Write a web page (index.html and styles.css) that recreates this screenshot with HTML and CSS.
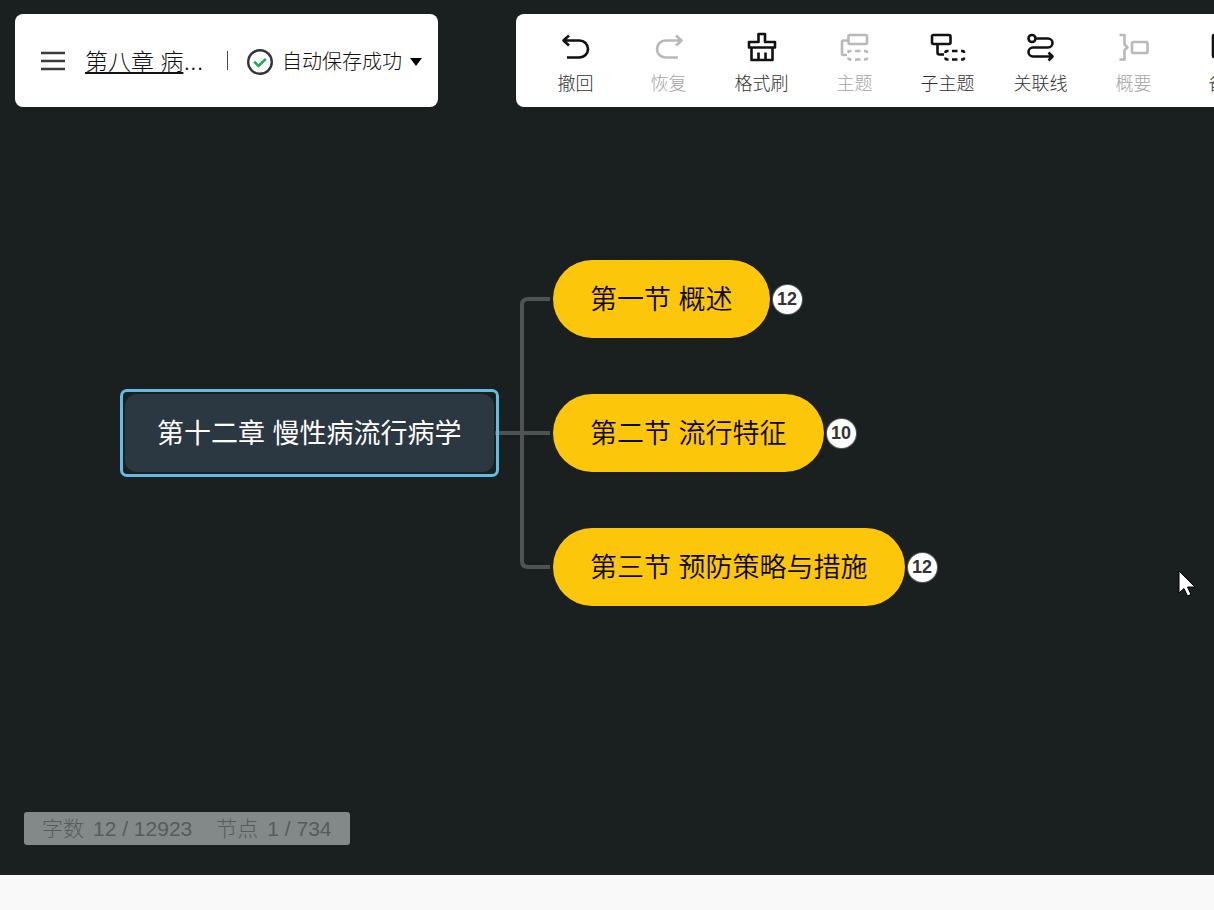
FILE: index.html
```html
<!DOCTYPE html>
<html lang="zh-CN">
<head>
<meta charset="utf-8">
<title>思维导图</title>
<link rel="stylesheet" href="styles.css">
</head>
<body>
<main class="canvas">
  <header class="header">
    <div class="file-card">
      <button class="menu-button" type="button" aria-label="菜单">
        <svg width="24" height="20" viewBox="0 0 24 20"><path d="M0 2h24M0 10h24M0 18h24" stroke="#3c3c3c" stroke-width="2.6"/></svg>
      </button>
      <div class="file-name"><a class="file-link" href="#">第八章 病</a><span class="dots">...</span></div>
      <span class="divider"></span>
      <button class="save-state" type="button">
        <svg width="28" height="28" viewBox="0 0 28 28" fill="none"><circle cx="14" cy="14" r="11.8" stroke="#34343a" stroke-width="2.4"/><path d="M8.2 13.8l4.300 4.200 7.300-7" stroke="#1fae55" stroke-width="2.6"/></svg>
        <span>自动保存成功</span>
        <svg width="12" height="8" viewBox="0 0 12 8"><path d="M0 0h12L6 8z" fill="#000"/></svg>
      </button>
    </div>
    <nav class="toolbar">
      <button class="tool" type="button">
        <svg class="icon" viewBox="0 0 32 32"><path d="M9 4.500L3.500 9.500L9 14.500M4 9.500h15.500a8.500 8.500 0 0 1 0 17H7"/></svg>
        <span>撤回</span>
      </button>
      <button class="tool" type="button" disabled>
        <svg class="icon" viewBox="0 0 32 32"><path d="M23 4.500L28.500 9.500L23 14.500M28 9.500H12.500a8.500 8.500 0 0 0 0 17H25"/></svg>
        <span>恢复</span>
      </button>
      <button class="tool" type="button">
        <svg class="icon" viewBox="0 0 32 32"><path d="M12.500 11V3h6.500v8h10v5.500H3V11zM5.500 16.500V29h21V16.500M12.500 21.500V29M19.500 21.500V29"/></svg>
        <span>格式刷</span>
      </button>
      <button class="tool" type="button" disabled>
        <svg class="icon" viewBox="0 0 32 32"><rect x="9.500" y="4" width="18.500" height="9" rx="1.500"/><path d="M9 9.500H4.500a1.500 1.500 0 0 0-1.500 1.500v11.500a1.500 1.500 0 0 0 1.500 1.500H8"/><path d="M9.500 22v-.5a1.500 1.500 0 0 1 1.500-1.500h1.500M16 20h5.500M25 20h1.500a1.500 1.500 0 0 1 1.500 1.500v.5M28 26.500v.5a1.500 1.500 0 0 1-1.500 1.500H25M21.500 28.500H16M12.500 28.500H11a1.500 1.500 0 0 1-1.500-1.500v-.5"/></svg>
        <span>主题</span>
      </button>
      <button class="tool" type="button">
        <svg class="icon wide" viewBox="0 0 36 32"><rect x="2" y="4" width="18.500" height="9" rx="1.500"/><path d="M7.500 13v8.500a2 2 0 0 0 2 2H14"/><path d="M15.500 22v-.5a1.500 1.500 0 0 1 1.500-1.500h1.500M22 20h5.500M31 20h1.500a1.500 1.500 0 0 1 1.500 1.500v.5M34 26.500v.5a1.500 1.500 0 0 1-1.500 1.500H31M27.500 28.500H22M18.500 28.500H17a1.500 1.500 0 0 1-1.500-1.500v-.5"/></svg>
        <span>子主题</span>
      </button>
      <button class="tool" type="button">
        <svg class="icon" viewBox="0 0 32 32"><circle cx="7" cy="7.500" r="3.500"/><path d="M10.500 7.500H23a4.500 4.500 0 0 1 0 9H8a4.500 4.500 0 0 0 0 9H26.500M23.500 21.500l4 4-4 4"/></svg>
        <span>关联线</span>
      </button>
      <button class="tool" type="button" disabled>
        <svg class="icon" viewBox="0 0 32 32"><path d="M1.500 4h5v9.500l3 2.800-3 2.800v9.400h-5"/><rect x="14" y="11" width="15.500" height="11" rx="1.500"/></svg>
        <span>概要</span>
      </button>
      <button class="tool" type="button">
        <svg class="icon" viewBox="0 0 32 32"><rect x="2" y="4" width="28" height="22" rx="1"/><path d="M9 11h14M9 18h9"/></svg>
        <span>备注</span>
      </button>
    </nav>
  </header>

  <section class="map" aria-label="思维导图">
    <svg class="links" width="560" height="620" fill="none" stroke="#505253" stroke-width="4"><path d="M495 433H550M550 299H528Q522 299 522 305V561Q522 567 528 567H550"/></svg>
    <div class="node root">第十二章 慢性病流行病学</div>
    <div class="branch first"><div class="node topic">第一节 概述</div><button class="count" type="button">12</button></div>
    <div class="branch second"><div class="node topic">第二节 流行特征</div><button class="count" type="button">10</button></div>
    <div class="branch third"><div class="node topic">第三节 预防策略与措施</div><button class="count" type="button">12</button></div>
    <svg class="cursor" width="20" height="28" viewBox="0 0 20 28"><path d="M1 1V23l5-4.500 3.500 7.500 3.500-1.600-3.500-7.400h7.500z" fill="#fff" stroke="#000" stroke-width="1"/></svg>
  </section>

  <div class="status"><span>字数</span><span>12 / 12923</span><span class="status-next">节点</span><span>1 / 734</span></div>
</main>
<footer class="footer"></footer>
</body>
</html>
```
FILE: styles.css
```css
* {
  box-sizing: border-box;
}

body {
  margin: 0;
  min-height: 100vh;
  display: flex;
  flex-direction: column;
  background: #f9f9f9;
  font-family: "Liberation Sans", "Noto Sans CJK SC", sans-serif;
}

button {
  border: 0;
  padding: 0;
  background: none;
  font: inherit;
  color: inherit;
}

svg {
  display: block;
  flex: none;
}

.canvas {
  position: relative;
  flex: 1;
  display: flex;
  flex-direction: column;
  justify-content: space-between;
  align-items: flex-start;
  padding: 14px 0 30px;
  background: #1a1f1f;
  overflow: hidden;
}

.footer {
  height: 35px;
}

.header {
  position: relative;
  z-index: 1;
  align-self: stretch;
  display: flex;
  gap: 78px;
  padding-left: 15px;
}

.file-card {
  flex: none;
  display: flex;
  align-items: center;
  padding: 0 16px 0 26px;
  background: #fff;
  border-radius: 8px;
}

.file-name {
  display: flex;
  align-items: baseline;
  width: 120px;
  margin-left: 20px;
  font-size: 23px;
  line-height: 32px;
  font-weight: 300;
  white-space: nowrap;
  color: #111;
}

.file-link {
  color: inherit;
  text-decoration: underline;
  text-decoration-thickness: 2px;
  text-underline-offset: 2px;
}

.dots {
  font-family: "Open Sans", sans-serif;
  font-size: 28px;
}

.divider {
  width: 1px;
  height: 19px;
  margin: 0 18px 0 22px;
  background: #40503c;
}

.save-state {
  display: flex;
  align-items: center;
  gap: 8px;
  padding-top: 2px;
  font-size: 20px;
  line-height: 28px;
  font-weight: 300;
  color: #111;
  white-space: nowrap;
}

.toolbar {
  flex: 1;
  min-width: 0;
  display: flex;
  padding-left: 13px;
  background: #fff;
  border-radius: 8px 0 0 8px;
  overflow: hidden;
}

.tool {
  flex: none;
  width: 93px;
  height: 93px;
  padding-top: 5px;
  display: flex;
  flex-direction: column;
  align-items: center;
  justify-content: center;
  gap: 9px;
  font-size: 18px;
  line-height: 24px;
  font-weight: 300;
  color: #333;
}

.tool:disabled {
  color: #a4a4a4;
}

.icon {
  width: 32px;
  height: 32px;
  fill: none;
  stroke: #111;
  stroke-width: 2.6;
  stroke-linejoin: round;
}

.icon.wide {
  width: 36px;
}

.tool:disabled .icon {
  stroke: #b9b9b9;
}

.map {
  position: absolute;
  inset: 0;
}

.node {
  font-size: 27px;
  line-height: 38px;
  white-space: nowrap;
}

.root {
  position: absolute;
  left: 125px;
  top: 394px;
  padding: 21px 32px 19px;
  border-radius: 12px;
  background: #2b3741;
  color: #fff;
}

.root::before {
  content: "";
  position: absolute;
  inset: -5px;
  border: 3px solid #62bce8;
  border-radius: 7px;
}

.branch {
  position: absolute;
  left: 553px;
  display: flex;
  align-items: center;
  gap: 3px;
}

.first {
  top: 260px;
}

.second {
  top: 394px;
}

.third {
  top: 528px;
}

.topic {
  padding: 21px 37px 19px;
  border-radius: 39px;
  background: #fcc60a;
  color: #0c0800;
  font-weight: 350;
}

.count {
  width: 29px;
  height: 29px;
  border-radius: 50%;
  background: #fff;
  box-shadow: 0 0 0 1px #55585a;
  color: #333;
  font-size: 18px;
  line-height: 29px;
  font-weight: 700;
  text-align: center;
}

.links {
  position: absolute;
  left: 0;
  top: 0;
}

.cursor {
  position: absolute;
  left: 1178px;
  top: 570px;
}

.status {
  position: relative;
  display: flex;
  gap: 9px;
  margin-left: 24px;
  padding: 0 18px;
  border-radius: 3px;
  background: #838888;
  color: #565b5b;
  font-size: 21px;
  line-height: 33px;
  font-weight: 300;
  white-space: nowrap;
}

.status-next {
  margin-left: 15px;
}
```
